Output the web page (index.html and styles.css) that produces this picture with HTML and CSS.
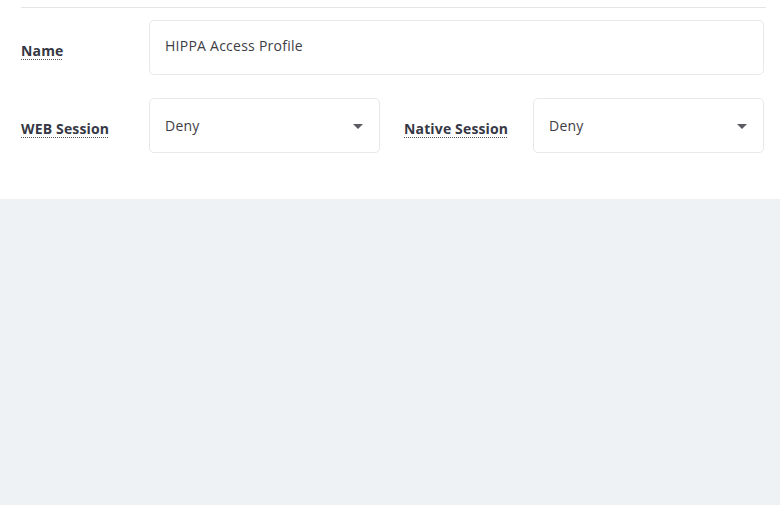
FILE: index.html
```html
<!DOCTYPE html>
<html>
<head>
<meta charset="utf-8">
<link rel="stylesheet" href="styles.css">
</head>
<body>
<div class="panel">
  <div class="divider"></div>
  <div class="row row-name">
    <label class="label"><abbr title="Profile name">Name</abbr></label>
    <div class="field input">HIPPA Access Profile</div>
  </div>
  <div class="row row-sessions">
    <label class="label"><abbr title="Web session access">WEB Session</abbr></label>
    <div class="field select"><span>Deny</span><span class="caret"></span></div>
    <label class="label label-native"><abbr title="Native session access">Native Session</abbr></label>
    <div class="field select"><span>Deny</span><span class="caret"></span></div>
  </div>
</div>
</body>
</html>
```
FILE: styles.css
```css
* { box-sizing: border-box; }
html, body { margin: 0; padding: 0; }
body {
  background: #eef2f5;
  font-family: "Open Sans", "Noto Sans", sans-serif;
  color: #3b3b45;
  width: 780px;
  height: 505px;
  overflow: hidden;
}
.panel {
  background: #ffffff;
  height: 199px;
  padding: 7px 16px 0 21px;
}
.divider {
  height: 1px;
  background: #e3e5e8;
  margin-right: -2px;
}
.row {
  display: grid;
  align-items: center;
}
.row-name {
  grid-template-columns: 128px 1fr;
  margin-top: 12px;
}
.row-sessions {
  grid-template-columns: 128px 231px 153px 231px;
  margin-top: 23px;
}
.label-native { padding-left: 24px; }
.label {
  font-size: 14px;
  font-weight: 700;
  color: #363845;
  padding-top: 6px;
  letter-spacing: 0.15px;
}
.label abbr {
  text-decoration: underline dotted #555;
  text-underline-offset: 3px;
  text-decoration-thickness: 1px;
}
.field {
  height: 55px;
  border: 1px solid #e6e8eb;
  border-radius: 5px;
  background: #fff;
  font-size: 14px;
  letter-spacing: 0.25px;
  color: #3d3d45;
  padding: 0 16px 0 15px;
  display: flex;
  align-items: center;
}
.input { padding-bottom: 4px; }
.select {
  justify-content: space-between;
  padding-right: 16px;
}
.caret {
  width: 0;
  height: 0;
  border-left: 5px solid transparent;
  border-right: 5px solid transparent;
  border-top: 5px solid #5a5a62;
  margin-top: 1px;
}
```
